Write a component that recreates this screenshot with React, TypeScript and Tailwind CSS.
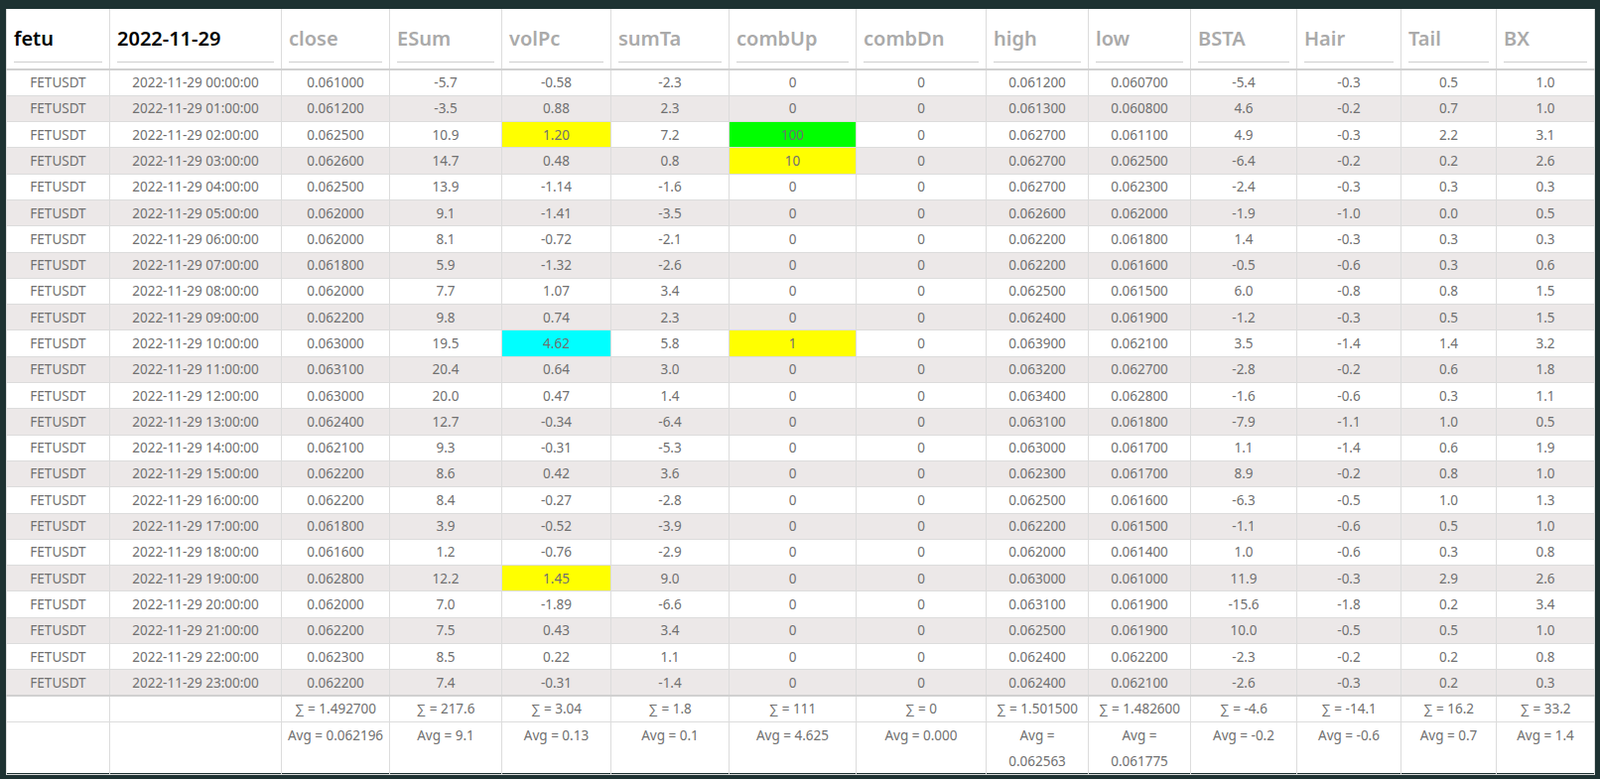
const rows: string[][] = [
  ["00", "0.061000", "-5.7", "-0.58", "-2.3", "0", "0", "0.061200", "0.060700", "-5.4", "-0.3", "0.5", "1.0"],
  ["01", "0.061200", "-3.5", "0.88", "2.3", "0", "0", "0.061300", "0.060800", "4.6", "-0.2", "0.7", "1.0"],
  ["02", "0.062500", "10.9", "1.20", "7.2", "100", "0", "0.062700", "0.061100", "4.9", "-0.3", "2.2", "3.1"],
  ["03", "0.062600", "14.7", "0.48", "0.8", "10", "0", "0.062700", "0.062500", "-6.4", "-0.2", "0.2", "2.6"],
  ["04", "0.062500", "13.9", "-1.14", "-1.6", "0", "0", "0.062700", "0.062300", "-2.4", "-0.3", "0.3", "0.3"],
  ["05", "0.062000", "9.1", "-1.41", "-3.5", "0", "0", "0.062600", "0.062000", "-1.9", "-1.0", "0.0", "0.5"],
  ["06", "0.062000", "8.1", "-0.72", "-2.1", "0", "0", "0.062200", "0.061800", "1.4", "-0.3", "0.3", "0.3"],
  ["07", "0.061800", "5.9", "-1.32", "-2.6", "0", "0", "0.062200", "0.061600", "-0.5", "-0.6", "0.3", "0.6"],
  ["08", "0.062000", "7.7", "1.07", "3.4", "0", "0", "0.062500", "0.061500", "6.0", "-0.8", "0.8", "1.5"],
  ["09", "0.062200", "9.8", "0.74", "2.3", "0", "0", "0.062400", "0.061900", "-1.2", "-0.3", "0.5", "1.5"],
  ["10", "0.063000", "19.5", "4.62", "5.8", "1", "0", "0.063900", "0.062100", "3.5", "-1.4", "1.4", "3.2"],
  ["11", "0.063100", "20.4", "0.64", "3.0", "0", "0", "0.063200", "0.062700", "-2.8", "-0.2", "0.6", "1.8"],
  ["12", "0.063000", "20.0", "0.47", "1.4", "0", "0", "0.063400", "0.062800", "-1.6", "-0.6", "0.3", "1.1"],
  ["13", "0.062400", "12.7", "-0.34", "-6.4", "0", "0", "0.063100", "0.061800", "-7.9", "-1.1", "1.0", "0.5"],
  ["14", "0.062100", "9.3", "-0.31", "-5.3", "0", "0", "0.063000", "0.061700", "1.1", "-1.4", "0.6", "1.9"],
  ["15", "0.062200", "8.6", "0.42", "3.6", "0", "0", "0.062300", "0.061700", "8.9", "-0.2", "0.8", "1.0"],
  ["16", "0.062200", "8.4", "-0.27", "-2.8", "0", "0", "0.062500", "0.061600", "-6.3", "-0.5", "1.0", "1.3"],
  ["17", "0.061800", "3.9", "-0.52", "-3.9", "0", "0", "0.062200", "0.061500", "-1.1", "-0.6", "0.5", "1.0"],
  ["18", "0.061600", "1.2", "-0.76", "-2.9", "0", "0", "0.062000", "0.061400", "1.0", "-0.6", "0.3", "0.8"],
  ["19", "0.062800", "12.2", "1.45", "9.0", "0", "0", "0.063000", "0.061000", "11.9", "-0.3", "2.9", "2.6"],
  ["20", "0.062000", "7.0", "-1.89", "-6.6", "0", "0", "0.063100", "0.061900", "-15.6", "-1.8", "0.2", "3.4"],
  ["21", "0.062200", "7.5", "0.43", "3.4", "0", "0", "0.062500", "0.061900", "10.0", "-0.5", "0.5", "1.0"],
  ["22", "0.062300", "8.5", "0.22", "1.1", "0", "0", "0.062400", "0.062200", "-2.3", "-0.2", "0.2", "0.8"],
  ["23", "0.062200", "7.4", "-0.31", "-1.4", "0", "0", "0.062400", "0.062100", "-2.6", "-0.3", "0.2", "0.3"],
];

const widths = ["w-[104px]", "w-[173px]", "w-[109px]", "w-[113px]", "w-[110px]", "w-[119px]", "w-[128px]", "w-[131px]", "w-[103px]", "w-[103px]", "w-[107px]", "w-[105px]", "w-[96px]", "w-[99px]"];
const heads = ["close", "ESum", "volPc", "sumTa", "combUp", "combDn", "high", "low", "BSTA", "Hair", "Tail", "BX"];
const sums = ["1.492700", "217.6", "3.04", "1.8", "111", "0", "1.501500", "1.482600", "-4.6", "-14.1", "16.2", "33.2"];
const avgs = ["0.062196", "9.1", "0.13", "0.1", "4.625", "0.000", "0.062563", "0.061775", "-0.2", "-0.6", "0.7", "1.4"];

// highlighted cells: row hour -> column index (in rows array) -> bg
const hl: Record<string, Record<number, string>> = {
  "02": { 3: "bg-[#ffff00]", 5: "bg-[#00ff00]" },
  "03": { 5: "bg-[#ffff00]" },
  "10": { 3: "bg-[#00ffff]", 5: "bg-[#ffff00]" },
  "19": { 3: "bg-[#ffff00]" },
};

const cell = "border border-[#dcdcdc] text-center h-[26.3px] p-0 px-[2px]";

export default function App() {
  return (
    <div className="w-[1612px] h-[785px] bg-[#1e3232] pt-[9px] pl-[6px] pr-[6px] pb-[6px] font-['Lato','Open_Sans',sans-serif]">
      <div className="bg-white h-[770px]">
        <table className="table-fixed border-collapse w-[1600px] text-[13.5px] text-[#707070]">
          <colgroup>
            {widths.map((w, i) => (
              <col key={i} className={w} />
            ))}
          </colgroup>
          <thead>
            <tr className="h-[61px] border-b-2 border-[#d0d0d0]">
              {["fetu", "2022-11-29", ...heads].map((h, i) => (
                <th key={h} className="border-x border-[#dcdcdc] text-left font-semibold px-[7px] align-middle">
                  <div className={`text-[20px] pb-2 border-b border-[#cfcfcf] mt-2 ${i < 2 ? "text-black" : "text-[#aaa]"}`}>{h}</div>
                </th>
              ))}
            </tr>
          </thead>
          <tbody>
            {rows.map((r, ri) => (
              <tr key={r[0]} className={ri % 2 ? "bg-[#ece8e8]" : "bg-white"}>
                <td className={cell}>FETUSDT</td>
                <td className={cell}>2022-11-29 {r[0]}:00:00</td>
                {r.slice(1).map((v, ci) => (
                  <td key={ci} className={`${cell} ${hl[r[0]]?.[ci + 1] ?? ""}`}>{v}</td>
                ))}
              </tr>
            ))}
            <tr className="border-t-2 border-[#d0d0d0]">
              <td className={cell}></td>
              <td className={cell}></td>
              {sums.map((s, i) => (
                <td key={i} className={cell}>∑ = {s}</td>
              ))}
            </tr>
            <tr className="h-[52px]">
              <td className="border border-[#dcdcdc]"></td>
              <td className="border border-[#dcdcdc]"></td>
              {avgs.map((a, i) => (
                <td key={i} className={`border border-[#dcdcdc] text-center align-top leading-[26px] px-[2px] ${i === 6 || i === 7 ? "px-[14px]" : ""}`}>Avg = {a}</td>
              ))}
            </tr>
          </tbody>
        </table>
      </div>
    </div>
  );
}
